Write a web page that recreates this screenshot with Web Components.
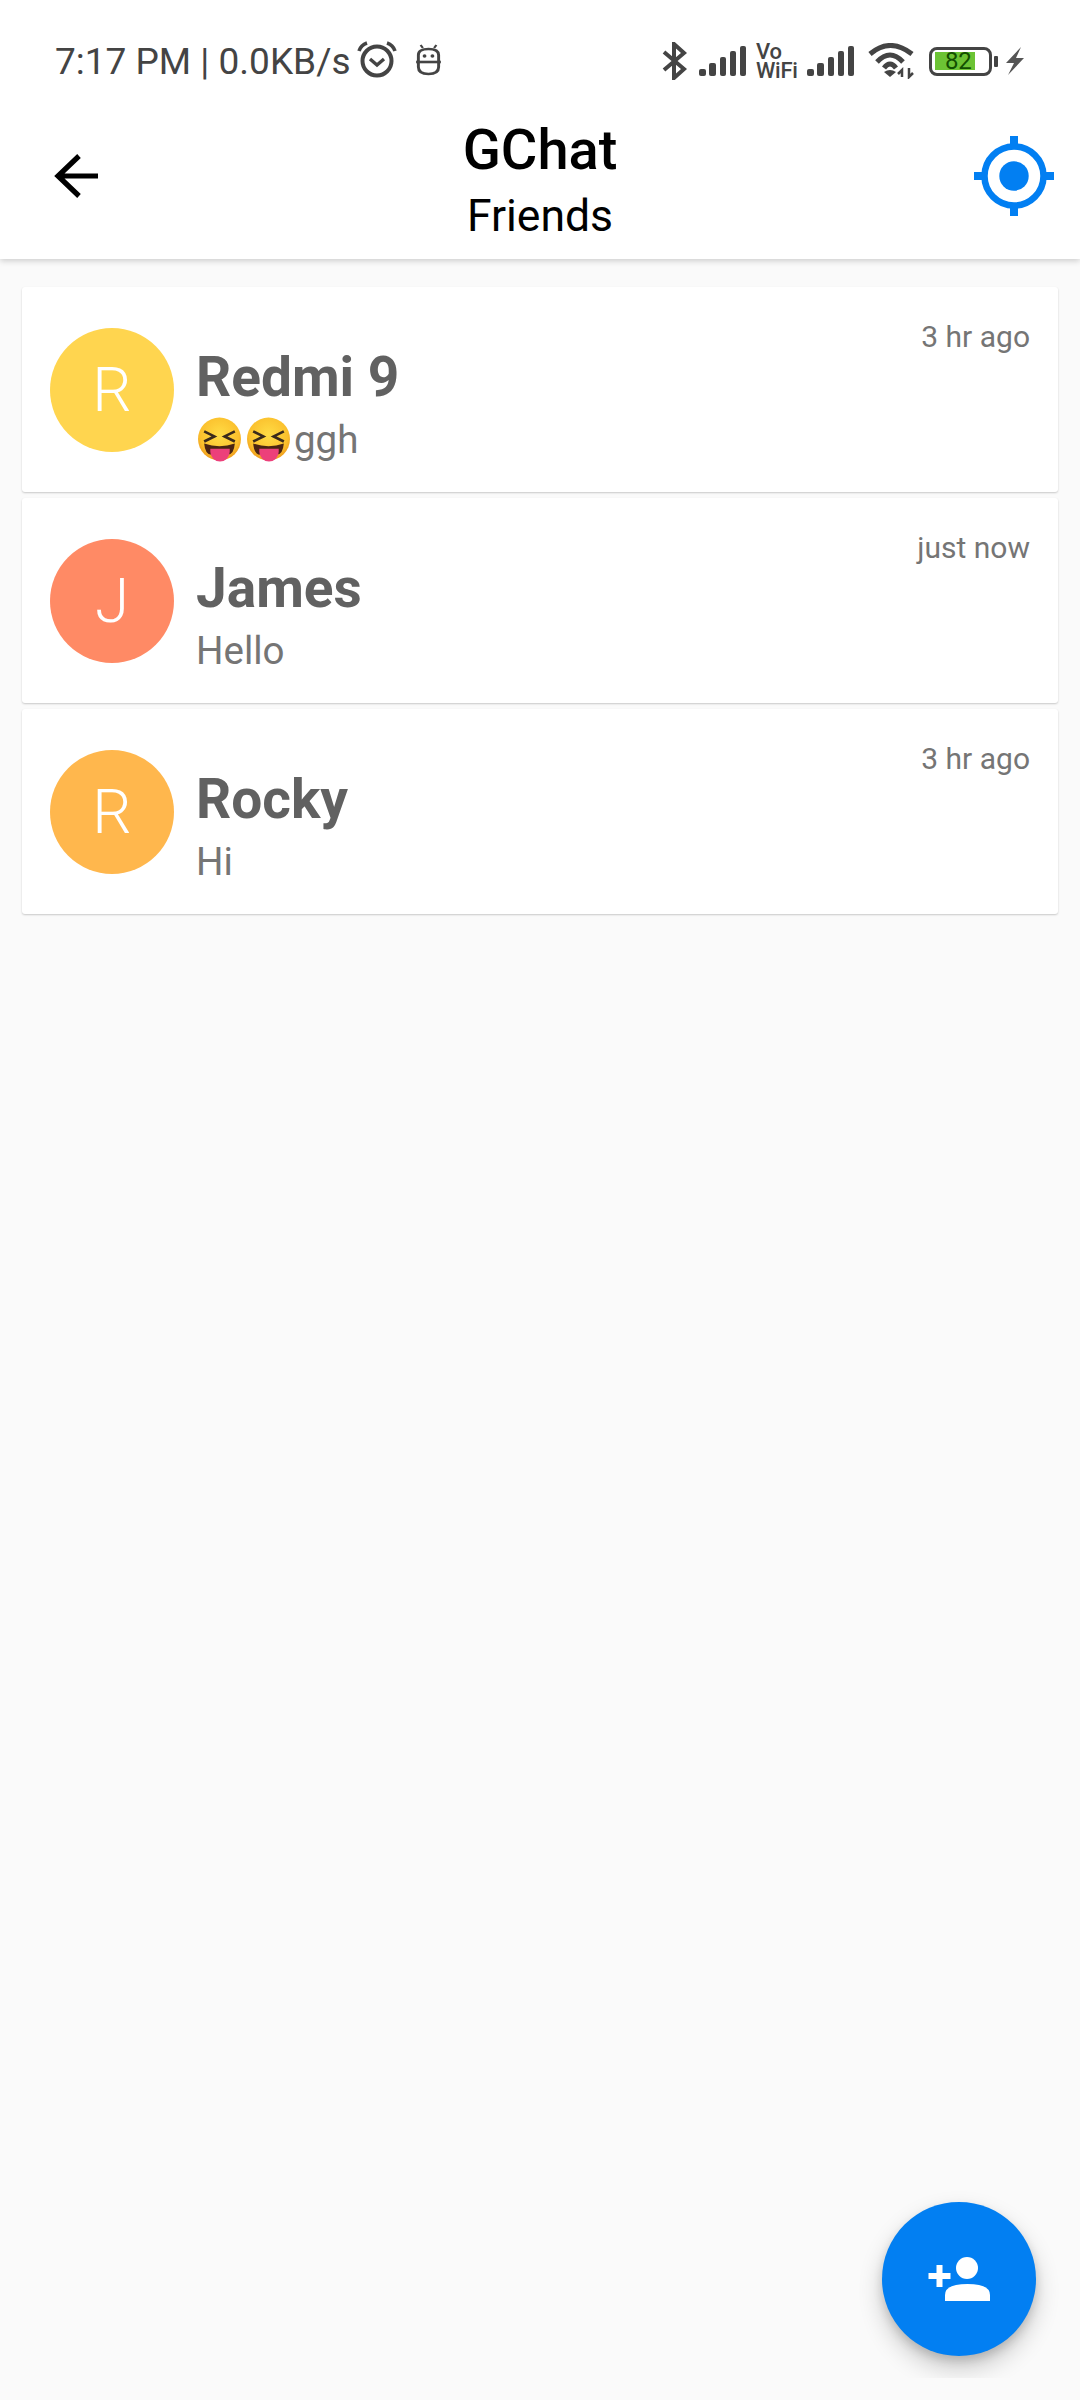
<!DOCTYPE html>
<html>
<head>
<meta charset="utf-8">
<title>GChat</title>
<style>
  html, body { margin: 0; padding: 0; height: 100%; }
  body { background: #fafafa; font-family: Roboto, "Noto Sans", sans-serif; }
  #app { display: flex; flex-direction: column; width: 1080px; height: 2400px; position: relative; overflow: hidden; }
</style>
</head>
<body>
<div id="app">
  <chat-header title-text="GChat" subtitle="Friends"></chat-header>
  <friend-list>
    <friend-tile name="Redmi 9" time="3 hr ago" letter="R" color="#ffd54f" emoji>ggh</friend-tile>
    <friend-tile name="James" time="just now" letter="J" color="#ff8a65">Hello</friend-tile>
    <friend-tile name="Rocky" time="3 hr ago" letter="R" color="#ffb74d">Hi</friend-tile>
  </friend-list>
  <add-fab></add-fab>
</div>

<script>
const BARS = `<svg width="48" height="32" viewBox="0 0 48 32">
  <g fill="#444"><rect x="0" y="24" width="7" height="7" rx="2"/><rect x="10" y="18" width="7" height="13" rx="2"/><rect x="21" y="12" width="6" height="19" rx="2"/><rect x="31" y="6" width="6" height="25" rx="2"/><rect x="41" y="1" width="6" height="30" rx="2"/></g>
</svg>`;

// Phone status row
class StatusBar extends HTMLElement {
  constructor() {
    super();
    this.attachShadow({ mode: 'open' });
    this.shadowRoot.innerHTML = `
      <style>
        :host { display: flex; align-items: center; height: 62px; padding: 32px 55px 0 55px; color: #444; font-size: 37px; }
        .left, .right { display: flex; align-items: center; }
        .text { white-space: nowrap; margin-bottom: 3px; }
        .right { margin-left: auto; margin-bottom: 4px; }
        svg { display: block; flex: none; }
        .vowifi { white-space: pre-line; font-size: 22px; line-height: 19px; font-weight: 500; width: 41px; margin: 0 10px 0 9px; letter-spacing: -0.3px; }
        .battery { display: flex; align-items: center; margin: 0 7px 0 15px; }
        .cell { width: 63px; height: 29px; box-sizing: border-box; border: 3.5px solid #444; border-radius: 8px; padding: 2px 3px; }
        .fill { width: 40px; height: 18px; background: #6cc334; color: #124f00; font-size: 24px; line-height: 19px; padding-left: 10px; box-sizing: border-box; letter-spacing: -0.3px; }
        .nub { width: 4px; height: 11px; background: #444; margin-left: 2px; border-radius: 1px; }
      </style>
      <div class="left">
        <span class="text">7:17 PM | 0.0KB/s</span>
        <svg width="42" height="38" viewBox="0 0 42 38" style="margin:0 0 8px 5px">
          <circle cx="21" cy="21" r="14.5" fill="none" stroke="#444" stroke-width="4"/>
          <path d="M14 19l7 6 7-6" fill="none" stroke="#444" stroke-width="3.4"/>
          <path d="M3 11Q5 5 11 3M39 11Q37 5 31 3" fill="none" stroke="#444" stroke-width="3.6"/>
        </svg>
        <svg width="27" height="32" viewBox="0 0 24 32" preserveAspectRatio="none" style="margin:0 0 6px 17px">
          <path d="M3 17V11Q3 5 12 5Q21 5 21 11V17" fill="none" stroke="#444" stroke-width="2.6"/>
          <path d="M3 19V23Q3 30 12 30Q21 30 21 23V19" fill="none" stroke="#444" stroke-width="2.6"/>
          <path d="M1 18H23" stroke="#444" stroke-width="2.6"/>
          <circle cx="8.5" cy="12" r="1.7" fill="#444"/><circle cx="15.5" cy="12" r="1.7" fill="#444"/>
          <path d="M5 1L7 4M19 1L17 4" stroke="#444" stroke-width="2"/>
        </svg>
      </div>
      <div class="right">
        <svg width="26" height="38" viewBox="0 0 26 38" style="margin-right:12px">
          <path d="M3 10L23 27L13 36V2L23 11L3 28" fill="none" stroke="#444" stroke-width="4"/>
        </svg>
        ${BARS}
        <span class="vowifi">Vo
WiFi</span>
        ${BARS}
        <svg width="46" height="36" viewBox="0 0 46 36" style="margin-left:13px">
          <path d="M2 11Q22 -6 44 11M9 19Q22 5 35 19M16 25Q22 17 28 25" fill="none" stroke="#444" stroke-width="5"/>
          <path d="M16 29Q22 25 28 29L22 34Z" fill="#444"/>
          <path d="M34 34V27L30 31M41 25V34L45 30" fill="none" stroke="#444" stroke-width="2.5"/>
        </svg>
        <div class="battery">
          <div class="cell"><div class="fill">82</div></div>
          <div class="nub"></div>
        </div>
        <svg width="20" height="30" viewBox="0 0 20 30">
          <path d="M16 1L1 17H9L3 29L19 12H11Z" fill="#555"/>
        </svg>
      </div>
    `;
  }
}
customElements.define('status-bar', StatusBar);

class ChatHeader extends HTMLElement {
  constructor() {
    super();
    this.attachShadow({ mode: 'open' });
  }
  connectedCallback() {
    this.shadowRoot.innerHTML = `
      <style>
        :host { display: block; background: #fff; box-shadow: 0 2px 6px rgba(0,0,0,.18); position: relative; z-index: 2; height: 259px; }
        .bar { display: grid; grid-template-columns: 1fr auto 1fr; align-items: center; height: 164px; }
        .titles { text-align: center; color: #000; margin-top: 8px; }
        .t { font-size: 56px; font-weight: 500; line-height: 64px; }
        .s { font-size: 44.5px; line-height: 52px; margin-top: 8px; }
        .back { padding-left: 54px; }
        .loc { justify-self: end; padding-right: 26px; }
        svg { display: block; }
      </style>
      <status-bar></status-bar>
      <div class="bar">
        <div class="back">
          <svg width="44" height="46" viewBox="0 0 44 46"><path d="M44 23H4M25 3L4 23L25 43" fill="none" stroke="#000" stroke-width="5.2"/></svg>
        </div>
        <div class="titles">
          <div class="t">${this.getAttribute('title-text')}</div>
          <div class="s">${this.getAttribute('subtitle')}</div>
        </div>
        <div class="loc">
          <svg width="80" height="80" viewBox="0 0 80 80">
            <circle cx="40" cy="40" r="29.5" fill="none" stroke="#027ff2" stroke-width="6.5"/>
            <circle cx="40" cy="40" r="14.7" fill="#027ff2"/>
            <path d="M40 0V10M40 70V80M0 40H10M70 40H80" stroke="#027ff2" stroke-width="8"/>
          </svg>
        </div>
      </div>
    `;
  }
}
customElements.define('chat-header', ChatHeader);

class FriendList extends HTMLElement {
  constructor() {
    super();
    this.attachShadow({ mode: 'open' });
    this.shadowRoot.innerHTML = `
      <style>
        :host { display: flex; flex-direction: column; gap: 6px; padding: 28px 22px 0; }
      </style>
      <slot></slot>
    `;
  }
}
customElements.define('friend-list', FriendList);

const EMOJI = `<svg width="45" height="45" viewBox="0 0 44 44" style="display:block;flex:none">
  <defs><radialGradient id="f" cx="50%" cy="40%" r="60%"><stop offset="0" stop-color="#ffdc45"/><stop offset=".75" stop-color="#fbc02d"/><stop offset="1" stop-color="#ee9a1a"/></radialGradient></defs>
  <circle cx="22" cy="21.5" r="21" fill="url(#f)"/>
  <path d="M7 14l10 5-10 5M37 14l-10 5 10 5" fill="none" stroke="#3a2a1c" stroke-width="2.6"/>
  <path d="M7 26Q22 31 37 26Q36 37 30 37H14Q8 37 7 26Z" fill="#4a2413"/>
  <path d="M13 31H32V34A9.5 9.5 0 0 1 13 34Z" fill="#ec407a"/>
</svg>`;

class FriendTile extends HTMLElement {
  constructor() {
    super();
    this.attachShadow({ mode: 'open' });
  }
  connectedCallback() {
    const a = n => this.getAttribute(n);
    this.shadowRoot.innerHTML = `
      <style>
        :host { display: flex; align-items: center; height: 205px; box-sizing: border-box; background: #fff; border-radius: 3px; box-shadow: 0 1px 2px rgba(0,0,0,.2); padding: 0 28px; position: relative; }
        .avatar { width: 124px; height: 124px; border-radius: 50%; background: ${a('color')}; color: #fff; font-size: 62px; font-weight: 300; display: flex; align-items: center; justify-content: center; flex: none; }
        .body { margin: 58px 0 0 22px; flex: 1; align-self: flex-start; }
        .name { font-size: 55px; font-weight: 700; color: #616161; line-height: 64px; }
        .msg { display: flex; align-items: center; gap: 3px; font-size: 38.5px; font-weight: 400; color: #757575; line-height: 45px; margin-top: 8px; }
        .emoji { display: flex; gap: 4px; margin-left: 1px; }
        .time { position: absolute; right: 28px; top: 32px; font-size: 30px; color: #757575; line-height: 36px; }
      </style>
      <div class="avatar">${a('letter')}</div>
      <div class="body">
        <div class="name">${a('name')}</div>
        <div class="msg">${this.hasAttribute('emoji') ? `<div class="emoji">${EMOJI}${EMOJI}</div>` : ''}<span><slot></slot></span></div>
      </div>
      <div class="time">${a('time')}</div>
    `;
  }
}
customElements.define('friend-tile', FriendTile);

// The shadow is cut off at y=2378 in the reference, hence the clipping wrapper
class AddFab extends HTMLElement {
  constructor() {
    super();
    this.attachShadow({ mode: 'open' });
    this.shadowRoot.innerHTML = `
      <style>
        :host { position: absolute; left: 842px; top: 2160px; width: 238px; height: 218px; overflow: hidden; }
        .btn { width: 154px; height: 154px; margin: 42px 0 0 40px; border-radius: 50%; background: #027ff2; box-shadow: 0 12px 24px rgba(0,0,0,.2), 0 5px 10px rgba(0,0,0,.14); display: flex; align-items: center; justify-content: center; }
        svg { display: block; }
      </style>
      <div class="btn">
        <svg width="66" height="66" viewBox="0 0 66 66">
          <circle cx="41" cy="22" r="11" fill="#fff"/>
          <path d="M19 55V49Q19 38 41.5 38Q64 38 64 49V55Z" fill="#fff"/>
          <path d="M2.5 30H24.5M13.5 19V41" stroke="#fff" stroke-width="6"/>
        </svg>
      </div>
    `;
  }
}
customElements.define('add-fab', AddFab);
</script>
</body>
</html>
